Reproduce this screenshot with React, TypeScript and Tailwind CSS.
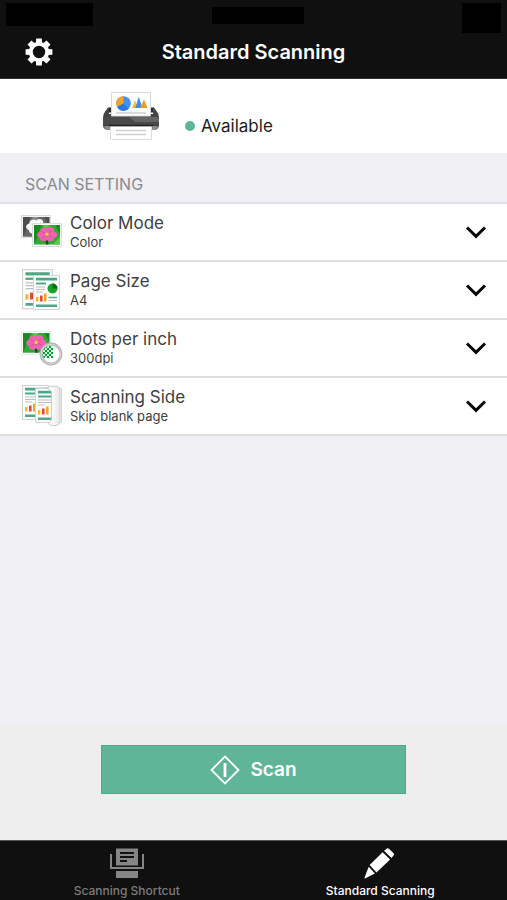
import { useState } from 'react'
import type { ReactNode } from 'react'

interface Setting {
  id: string
  label: string
  options: string[]
  icon: ReactNode
}

function GearIcon() {
  return (
    <svg viewBox="0 0 28 28" className="size-7" fill="#fff" aria-hidden="true">
      {[0, 45, 90, 135].map(a => (
        <path key={a} d="M11.2 .6h5.6l.3 5h-6.2zM10.900 22.4h6.2l-.3 5h-5.6z" transform={`rotate(${a} 14 14)`} />
      ))}
      <circle cx="14" cy="14" r="8.2" fill="none" stroke="#fff" strokeWidth="4" />
    </svg>
  )
}

function PrinterIcon() {
  return (
    <svg viewBox="0 0 60 52" className="h-[52px] w-[60px]" aria-hidden="true">
      <defs>
        <linearGradient id="body" x1="0" y1="0" x2="0" y2="1">
          <stop offset="0" stopColor="#4a4a4b" />
          <stop offset="1" stopColor="#39393a" />
        </linearGradient>
      </defs>
      <path d="M7 17.500h46l3 5H4z" fill="#2b2b2c" />
      <path d="M4.500 21 8 17.500V24h44v-6.500l3.500 3.500q2.500 2.500 2.500 7v7q0 4-4 5H6q-4-1-4-5v-7q0-4.500 2.500-7z" fill="url(#body)" />
      <path d="M10.5 2.5h39V26h-39z" fill="#fff" stroke="#dadada" />
      <circle cx="22.500" cy="13.500" r="7.300" fill="#3e93ee" />
      <path d="M22.500 13.500V6.200a7.300 7.300 0 0 0-6.400 10.800z" fill="#f6a21d" />
      <path d="M22.500 13.500 16.100 17a7.300 7.300 0 0 0 11.600 1.700z" fill="#2879df" />
      <path d="M31 18l3-8 2.400 8z" fill="#f6bb32" />
      <path d="M34.200 18l3.600-11.200 3.600 11.200z" fill="#3d8fe2" />
      <path d="M39 18l4-8.500 3.500 8.500z" fill="#f39a20" />
      <path d="M15 23h30" stroke="#c9c9c9" strokeWidth="1.400" />
      <path d="M2 27h26l5 5h25v3H2z" fill="#49494a" />
      <path d="M28 27h30v5H34z" fill="#646465" />
      <path d="M3 36h6v4H6q-2.500-.5-3-4zM51 36h6q-.5 3.500-3 4h-3z" fill="#8b8b8c" />
      <path d="M9.500 36.500h41v13h-41z" fill="#fff" stroke="#dcdcdc" />
      <path d="M8 35.500h44" stroke="#222" strokeWidth="1.500" />
      <path d="M15 40.500h30M15 44.500h30" stroke="#cfcfcf" strokeWidth="1.500" />
    </svg>
  )
}

// Small flower photo, shared by the colour and resolution icons
function Flower({ gray = false }: { gray?: boolean }) {
  const petal = gray ? '#fafafa' : '#f062b0'
  return (
    <g>
      <path d="M0 0h28v21H0z" fill={gray ? '#666' : '#32a935'} />
      <path d="M0 0h8L4 12 0 21zM23 0h5v10z" fill={gray ? '#4c4c4c' : '#1a8a27'} />
      <path d="M9 0h8l-4 5zM20 21l8-8v8z" fill={gray ? '#8a8a8a' : '#5bcb48'} />
      <path d="M13 14l1.500 7" stroke={gray ? '#333' : '#17451a'} strokeWidth="2.500" />
      <g fill={petal}>
        <ellipse cx="8.500" cy="10.500" rx="5.200" ry="3.800" />
        <ellipse cx="20" cy="10.500" rx="5" ry="3.800" />
        <ellipse cx="11" cy="6.500" rx="4" ry="3.800" />
        <ellipse cx="17.500" cy="6" rx="4" ry="3.800" />
        <ellipse cx="10.500" cy="14.500" rx="4" ry="3" />
        <ellipse cx="17.500" cy="14.500" rx="4" ry="3" />
      </g>
      <path d="M14 10 8 7M14 10l-5 4M14 10l6 3M14 10l5-4" stroke={gray ? '#e2e2e2' : '#dc4199'} strokeWidth=".8" />
      <circle cx="14" cy="10" r="1.900" fill={gray ? '#fff' : '#f5c63c'} />
    </g>
  )
}

function ColorModeIcon() {
  return (
    <svg viewBox="0 0 42 44" className="h-11 w-[42px]" aria-hidden="true">
      <path d="M.5 5.500h29v22H.5z" fill="#f4f4f4" stroke="#dcdcdc" />
      <g transform="translate(2 7) scale(.94)"><Flower gray /></g>
      <path d="M11.500 13.500h29v23h-29z" fill="#fff" stroke="#ddd" />
      <g transform="translate(13 15) scale(.93)"><Flower /></g>
    </svg>
  )
}

// One printed page with text lines and a bar chart
function Sheet({ pie = false }: { pie?: boolean }) {
  return (
    <g>
      <path d="M.5.5h26v34H.5z" fill="#fff" stroke="#d3d3d3" />
      <path d="M3 2.800h21v2.800H3zM3 29.500h21V32H3z" fill="#4fa883" />
      <path d="M3 7.500h10v2H3z" fill="#4fa883" />
      <path d="M3 12h9M3 14.500h9M3 17h7" stroke="#bdbdbd" />
      <path d="M3 22h2.500v4.500H3z" fill="#f2b632" />
      <path d="M7 20.500h2.600v6H7z" fill="#e0483c" />
      <path d="M11 18.500h2.600v8H11z" fill="#f0a428" />
      {pie ? (
        <g>
          <circle cx="19.500" cy="13.500" r="5" fill="#19a32a" />
          <path d="M19.500 13.500v-5a5 5 0 0 1 5 5z" fill="#086d18" />
          <path d="M15.500 22.500H24" stroke="#4fa883" strokeWidth="1.500" />
          <path d="M15.500 25.500H24" stroke="#c5c5c5" />
        </g>
      ) : (
        <g>
          <path d="M13 7.500h11v2H13z" fill="#4fa883" />
          <path d="M12 12h12M12 14.500h12" stroke="#bdbdbd" />
        </g>
      )}
    </g>
  )
}

function PageSizeIcon() {
  return (
    <svg viewBox="0 0 42 44" className="h-11 w-[42px]" aria-hidden="true">
      <g transform="translate(1 1) scale(1.150)"><Sheet /></g>
      <g transform="translate(12 7)"><Sheet pie /></g>
    </svg>
  )
}

function ResolutionIcon() {
  return (
    <svg viewBox="0 0 42 44" className="h-11 w-[42px]" aria-hidden="true">
      <defs>
        <pattern id="dots" width="4" height="4" patternUnits="userSpaceOnUse">
          <path d="M0 0h4v4H0z" fill="#d8f6dc" />
          <path d="M0 0h2v2H0zM2 2h2v2H2z" fill="#0a9a3b" />
        </pattern>
      </defs>
      <path d="M.5 5.500h29v23H.5z" fill="#fff" stroke="#dcecf0" />
      <g transform="translate(2 7) scale(.94)"><Flower /></g>
      <circle cx="30" cy="28" r="10" fill="#fff" />
      <path d="M22 20h10v12h-9l-3-4z" fill="url(#dots)" />
      <circle cx="30" cy="28" r="10" fill="none" stroke="#b3b3b3" strokeWidth="2.800" />
      <circle cx="30" cy="28" r="9.800" fill="none" stroke="#d6d6d6" />
    </svg>
  )
}

function ScanSideIcon() {
  return (
    <svg viewBox="0 0 42 44" className="h-11 w-[42px]" aria-hidden="true">
      <defs>
        <linearGradient id="fold">
          <stop offset="0" stopColor="#e2e2e2" />
          <stop offset=".4" stopColor="#fff" />
          <stop offset="1" stopColor="#e6e6e6" />
        </linearGradient>
      </defs>
      <g transform="translate(1 1)"><Sheet /></g>
      <g transform="translate(14 4)"><Sheet /></g>
      <path d="M24 4q10-3 13.500-1 1.500 1 1.500 5v29q0 4-4 4.500-7 .5-7.500-2.500 3-1 3-5V9q0-4-6.500-5z" fill="url(#fold)" stroke="#c6c6c6" strokeWidth=".9" />
    </svg>
  )
}

function ScannerTabIcon() {
  return (
    <svg viewBox="0 0 36 32" className="h-8 w-9" aria-hidden="true">
      <path d="M7 1.500h22v17H7z" fill="#858585" />
      <path d="M11 6h14M11 10h14M11 14h7" stroke="#111" strokeWidth="1.800" />
      <path d="M2 7v14h32V7" fill="none" stroke="#858585" strokeWidth="2" />
      <path d="M7 24h22v7H7z" fill="#858585" />
    </svg>
  )
}

function PencilTabIcon() {
  return (
    <svg viewBox="0 0 36 32" className="h-8 w-9" fill="#fff" aria-hidden="true">
      <path d="M25 1.500q1-.8 2 .2l4.500 4.500q1 1 .2 2L29.500 11 22 3.800z" />
      <path d="M20.600 5.200l7.500 7.400L14.500 25.500 7.600 18z" />
      <path d="M6.700 19.700l6.200 6.700L3 31.500q-.7 0-.5-.8z" />
    </svg>
  )
}

const settings: Setting[] = [
  { id: 'color-mode', label: 'Color Mode', options: ['Color', 'Grayscale', 'Black & White'], icon: <ColorModeIcon /> },
  { id: 'page-size', label: 'Page Size', options: ['A4', 'A5', 'Letter'], icon: <PageSizeIcon /> },
  { id: 'dpi', label: 'Dots per inch', options: ['300dpi', '200dpi', '600dpi'], icon: <ResolutionIcon /> },
  { id: 'side', label: 'Scanning Side', options: ['Skip blank page', 'Simplex', 'Duplex'], icon: <ScanSideIcon /> },
]

const tabs = [
  { label: 'Scanning Shortcut', icon: <ScannerTabIcon /> },
  { label: 'Standard Scanning', icon: <PencilTabIcon /> },
]

function SettingRow({ setting }: { setting: Setting }) {
  const [value, setValue] = useState(setting.options[0])

  return (
    <li className="flex h-[58px] items-center border-b-2 border-[#dfdfe1] bg-white pl-[21px] pr-5">
      {setting.icon}
      <div className="ml-[7px] flex min-w-0 flex-1 flex-col">
        <label htmlFor={setting.id} className="text-[17px] leading-5 text-[#404040]">{setting.label}</label>
        <select
          id={setting.id}
          value={value}
          onChange={e => setValue(e.target.value)}
          className="h-[18px] w-full appearance-none bg-transparent text-[13px] leading-[18px] text-[#404040] focus:outline-none"
        >
          {setting.options.map(o => <option key={o}>{o}</option>)}
        </select>
      </div>
      <svg viewBox="0 0 22 14" className="h-3.5 w-[22px]" fill="none" stroke="#080808" strokeWidth="3" aria-hidden="true">
        <path d="M2 2.500l9 8.800 9-8.800" />
      </svg>
    </li>
  )
}

export default function App() {
  const [active, setActive] = useState('Standard Scanning')

  return (
    <div className="flex min-h-screen flex-col bg-[#efeff4] font-['Inter',sans-serif]">
      <header className="bg-[#101010]">
        <div className="flex h-[34px] items-start justify-between pl-[6px] pr-[6px] pt-[3px]">
          <div className="flex flex-1"><span className="h-[23px] w-[87px] bg-black" /></div>
          <span className="ml-2 mt-1 h-[17px] w-[92px] bg-black" />
          <div className="flex flex-1 justify-end"><span className="h-[30px] w-[39px] bg-black" /></div>
        </div>
        <div className="grid h-[45px] grid-cols-[1fr_auto_1fr] items-center border-b border-[#333] pb-2 pl-[25px] pr-[25px]">
          <button type="button" aria-label="Settings" className="w-7"><GearIcon /></button>
          <h1 className="text-[20px] font-semibold leading-6 text-white">Standard Scanning</h1>
        </div>
      </header>

      <main className="flex flex-1 flex-col">
        <section className="flex h-[74px] items-center bg-white pl-[101px]">
          <PrinterIcon />
          <p className="ml-6 mt-5 flex items-center gap-[6px] text-[17px] leading-5 text-[#1c1c1c]">
            <span className="size-[10px] rounded-full bg-[#5fb597]" />
            Available
          </p>
        </section>

        <h2 className="flex h-[51px] items-end border-b-2 border-[#dfdfe1] pb-2 pl-[25px] text-[16px] leading-5 text-[#8a8a8f]">SCAN SETTING</h2>
        <ul>
          {settings.map(s => <SettingRow key={s.id} setting={s} />)}
        </ul>

        <div className="mt-auto flex justify-center bg-[#eeeeee] pb-[46px] pt-[22px]">
          <button
            type="button"
            className="flex h-[49px] w-3/5 items-center justify-center gap-[10px] border border-[#4cab88] bg-[#60b598] text-[19px] font-semibold leading-6 text-white"
          >
            <svg viewBox="0 0 30 30" className="size-[30px]" fill="none" stroke="#fff" strokeWidth="1.800" aria-hidden="true">
              <path d="M15 1.500 28.500 15 15 28.500 1.500 15z" />
              <path d="M15 8v14" strokeWidth="2.800" />
            </svg>
            Scan
          </button>
        </div>
      </main>

      <nav className="grid h-[60px] grid-cols-2 border-t border-[#555] bg-[#101010]">
        {tabs.map(t => (
          <button
            key={t.label}
            type="button"
            onClick={() => setActive(t.label)}
            className={`flex flex-col items-center gap-1 pt-[6px] text-[12px] font-medium leading-4 ${
              active === t.label ? 'text-white' : 'text-[#7d7d7d]'
            }`}
          >
            {t.icon}
            {t.label}
          </button>
        ))}
      </nav>
    </div>
  )
}
